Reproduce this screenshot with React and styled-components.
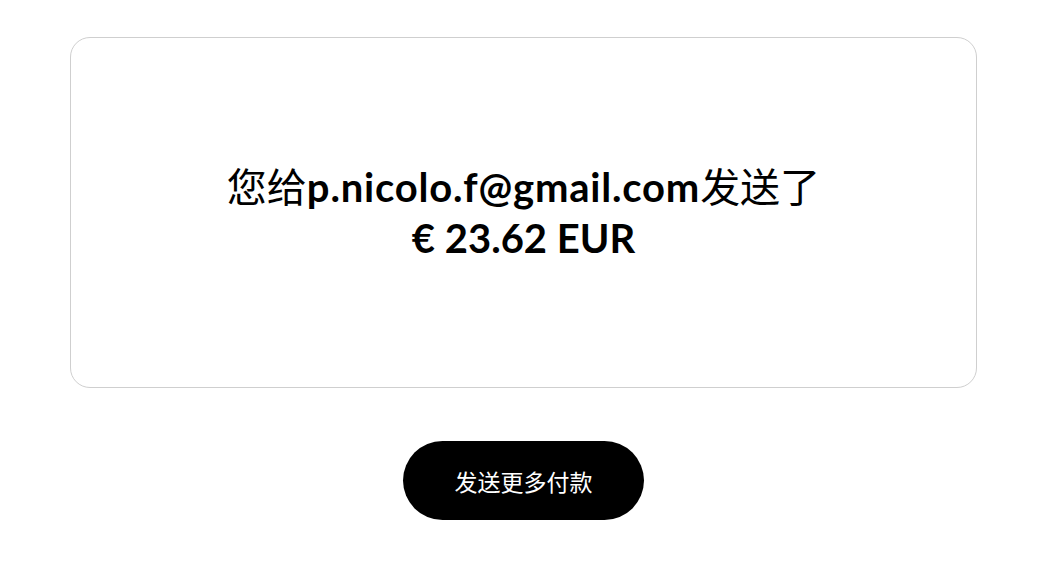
import React from "react";
import styled, { createGlobalStyle } from "styled-components";

const GlobalStyle = createGlobalStyle`
    html, body {
        margin: 0;
        padding: 0;
        background: #ffffff;
    }
`;

const Page = styled.main`
    display: flex;
    flex-direction: column;
    align-items: center;
    padding: 37px 71px 0 70px;
    font-family: "Lato", "Noto Sans CJK SC", sans-serif;
    color: #000;
`;

const Card = styled.section`
    box-sizing: border-box;
    width: 100%;
    height: 351px;
    border: 1px solid #cfcfcf;
    border-radius: 20px;
    display: flex;
    flex-direction: column;
    align-items: center;
    justify-content: center;
    text-align: center;
`;

const Line = styled.p`
    margin: 0;
    font-size: 40px;
    line-height: 51px;
    font-weight: ${(props) => (props.$bold ? 700 : 400)};
`;

const Strong = styled.span`
    font-weight: 700;
    letter-spacing: 0.8px;
`;

const Button = styled.button`
    margin-top: 53px;
    width: 241px;
    height: 79px;
    border: none;
    border-radius: 40px;
    background: #000;
    color: #fff;
    font-family: "Noto Sans CJK SC", sans-serif;
    font-size: 23px;
    cursor: pointer;
`;

const App = () => {
    return (
        <>
            <GlobalStyle />
            <Page>
                <Card>
                    <Line>
                        您给<Strong>p.nicolo.f@gmail.com</Strong>发送了
                    </Line>
                    <Line $bold>€ 23.62 EUR</Line>
                </Card>
                <Button>发送更多付款</Button>
            </Page>
        </>
    );
};

export default App;
